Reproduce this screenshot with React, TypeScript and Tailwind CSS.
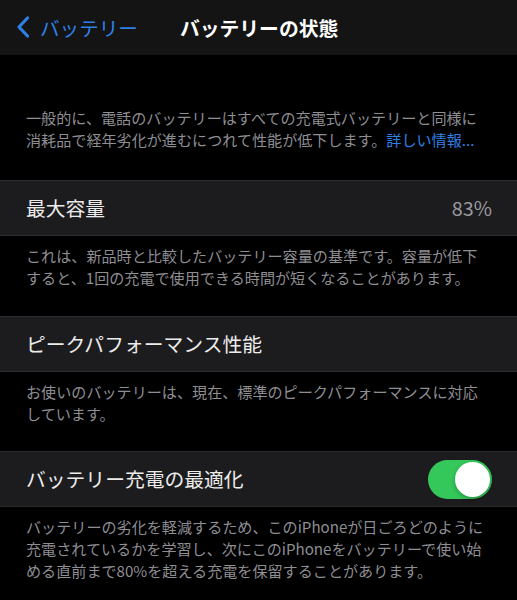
import React from "react";

const font = { fontFamily: '"Noto Sans CJK JP", "Noto Sans", sans-serif' };

function Footer({ lines, className = "" }: { lines: React.ReactNode[]; className?: string }) {
  return (
    <div className={`px-[26px] text-[15.1px] leading-[22px] text-[#8e8e93] ${className}`}>
      {lines.map((l, i) => (
        <div key={i} className="whitespace-nowrap">
          {l}
        </div>
      ))}
    </div>
  );
}

function Row({ children }: { children: React.ReactNode }) {
  return (
    <div className="flex h-[56px] items-center justify-between border-y border-[#2a2a2c] bg-[#1c1c1e] pl-[26px] pr-[25px] text-[19.8px] text-[#ececec]">
      {children}
    </div>
  );
}

export default function App() {
  return (
    <div className="h-[600px] w-[517px] overflow-hidden bg-black" style={font}>
      <div className="flex h-[55px] items-center bg-[#141414]">
        <div className="flex items-center pl-[15px] text-[#2f80e6]">
          <svg width="16" height="24" viewBox="0 0 16 24" fill="none">
            <path d="M12.5 3 L4 12 L12.5 21" stroke="#2f80e6" strokeWidth="3.2" strokeLinecap="round" strokeLinejoin="round" />
          </svg>
          <span className="ml-[9px] text-[19.6px]">バッテリー</span>
        </div>
        <div className="ml-[42px] text-[19.8px] font-bold text-white">バッテリーの状態</div>
      </div>

      <Footer
        className="pt-[51px] pb-[30px]"
        lines={[
          "一般的に、電話のバッテリーはすべての充電式バッテリーと同様に",
          <>
            消耗品で経年劣化が進むにつれて性能が低下します。
            <span className="text-[#2f80e6]">詳しい情報...</span>
          </>,
        ]}
      />

      <Row>
        <span>最大容量</span>
        <span className="text-[#9a9a9e]">83%</span>
      </Row>
      <Footer
        className="pt-[8px] pb-[28px]"
        lines={[
          "これは、新品時と比較したバッテリー容量の基準です。容量が低下",
          "すると、1回の充電で使用できる時間が短くなることがあります。",
        ]}
      />

      <Row>
        <span>ピークパフォーマンス性能</span>
      </Row>
      <Footer
        className="pt-[8px] pb-[27px]"
        lines={["お使いのバッテリーは、現在、標準のピークパフォーマンスに対応", "しています。"]}
      />

      <Row>
        <span>バッテリー充電の最適化</span>
        <div className="flex h-[39px] w-[64px] items-center justify-end rounded-full bg-[#34c759] pr-[2px]">
          <div className="h-[35px] w-[35px] rounded-full bg-white shadow-[0_2px_4px_rgba(0,0,0,0.25)]" />
        </div>
      </Row>
      <Footer
        className="pt-[8px]"
        lines={[
          "バッテリーの劣化を軽減するため、このiPhoneが日ごろどのように",
          "充電されているかを学習し、次にこのiPhoneをバッテリーで使い始",
          "める直前まで80%を超える充電を保留することがあります。",
        ]}
      />
    </div>
  );
}
